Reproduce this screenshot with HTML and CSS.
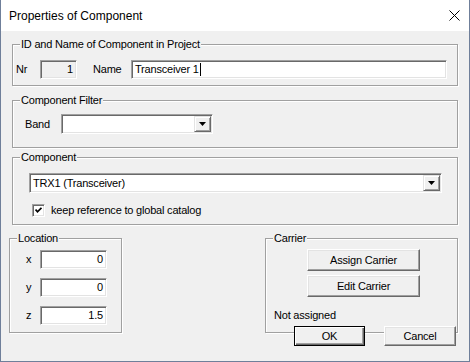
FILE: index.html
```html
<!DOCTYPE html>
<html lang="en">
<head>
    <meta charset="UTF-8">
    <title>Properties of Component</title>
    <link rel="stylesheet" href="styles.css">
</head>
<body>
    <div class="window">
        <div class="titlebar">
            <span class="title">Properties of Component</span>
            <svg class="close" width="11" height="11" viewBox="0 0 11 11">
                <path d="M0.5 0.5 L10.5 10.5 M10.5 0.5 L0.5 10.5" stroke="#000" stroke-width="1"/>
            </svg>
        </div>

        <div class="content">
            <div class="group group-id">
                <div class="legend">ID and Name of Component in Project</div>
                <div class="row">
                    <span class="lbl lbl-nr">Nr</span>
                    <div class="edit edit-nr disabled">1</div>
                    <span class="lbl lbl-name">Name</span>
                    <div class="edit edit-name">Transceiver 1<span class="caret"></span></div>
                </div>
            </div>

            <div class="group group-filter">
                <div class="legend">Component Filter</div>
                <div class="row">
                    <span class="lbl lbl-band">Band</span>
                    <div class="combo combo-band">
                        <span class="combo-text"></span>
                        <span class="drop-btn"><svg width="7" height="4" viewBox="0 0 7 4"><polygon points="0,0 7,0 3.5,4" fill="#000"/></svg></span>
                    </div>
                </div>
            </div>

            <div class="group group-component">
                <div class="legend">Component</div>
                <div class="combo combo-component">
                    <span class="combo-text">TRX1 (Transceiver)</span>
                    <span class="drop-btn"><svg width="7" height="4" viewBox="0 0 7 4"><polygon points="0,0 7,0 3.5,4" fill="#000"/></svg></span>
                </div>
                <div class="check-row">
                    <span class="check"><svg width="7" height="7" viewBox="0 0 7 7"><polyline points="0.5,2.5 2.5,4.8 6.5,0.8" fill="none" stroke="#000" stroke-width="1.8"/></svg></span>
                    <span>keep reference to global catalog</span>
                </div>
            </div>

            <div class="bottom-row">
                <div class="group group-location">
                    <div class="legend">Location</div>
                    <div class="coord-list">
                        <div class="row"><span class="lbl lbl-coord">x</span><div class="edit edit-coord">0</div></div>
                        <div class="row"><span class="lbl lbl-coord">y</span><div class="edit edit-coord">0</div></div>
                        <div class="row"><span class="lbl lbl-coord">z</span><div class="edit edit-coord">1.5</div></div>
                    </div>
                </div>

                <div class="group group-carrier">
                    <div class="legend">Carrier</div>
                    <div class="btn btn-carrier">Assign Carrier</div>
                    <div class="btn btn-carrier">Edit Carrier</div>
                    <div class="carrier-status">Not assigned</div>
                </div>
            </div>

            <div class="dialog-buttons">
                <div class="btn btn-ok">OK</div>
                <div class="btn btn-cancel">Cancel</div>
            </div>
        </div>
    </div>
</body>
</html>
```

FILE: styles.css
```css
body {
    margin: 0;
    font-family: 'Liberation Sans', Arial, sans-serif;
    font-size: 11px;
    letter-spacing: -0.2px;
    color: #000;
    background-color: #f0f0f0;
}

.window {
    width: 470px;
    height: 362px;
    box-sizing: border-box;
    border: 1px solid #6f7f9a;
    border-top: none;
    background-color: #f0f0f0;
    overflow: hidden;
}

.titlebar {
    height: 31px;
    background-color: #fff;
    display: flex;
    align-items: center;
    justify-content: space-between;
    padding: 0 9px 0 8px;
}

.title {
    font-size: 12px;
    line-height: 14px;
    letter-spacing: 0;
}

.close {
    display: block;
}

.content {
    padding: 0 11px;
}

/* group boxes */
.group {
    border: 1px solid #a0a0a0;
    box-shadow: inset 1px 1px #fff, 1px 1px #fff;
}

.legend {
    display: table;
    margin: -7px 0 0 7px;
    padding: 0 1px;
    line-height: 13px;
    background-color: #f0f0f0;
}

.row {
    display: flex;
    align-items: center;
}

.lbl {
    line-height: 13px;
}

.group-id {
    margin-top: 13px;
    padding-bottom: 6px;
}

.group-id .row {
    margin-top: 9px;
    padding-left: 3px;
}

.lbl-nr {
    width: 24px;
}

.lbl-name {
    width: 38px;
    margin-left: 16px;
}

.group-filter {
    margin-top: 14px;
    padding-bottom: 13px;
}

.group-filter .row {
    margin-top: 7px;
    padding-left: 12px;
}

.lbl-band {
    width: 36px;
}

.group-component {
    margin-top: 9px;
    padding-bottom: 7px;
}

/* edit fields */
.edit {
    box-sizing: border-box;
    height: 19px;
    line-height: 17px;
    padding: 0 3px;
    background-color: #fff;
    border: 1px solid;
    border-color: #a0a0a0 #fff #fff #a0a0a0;
    box-shadow: inset 1px 1px #696969, inset -1px -1px #e3e3e3;
    white-space: nowrap;
}

.edit.disabled {
    background-color: #f0f0f0;
}

.edit-nr {
    width: 37px;
    text-align: right;
}

.edit-name {
    flex: 1;
    margin-right: 10px;
}

.caret {
    display: inline-block;
    width: 1px;
    height: 13px;
    margin-left: 1px;
    vertical-align: -3px;
    background-color: #000;
}

/* combo boxes */
.combo {
    box-sizing: border-box;
    height: 20px;
    display: flex;
    align-items: center;
    background-color: #fff;
    border: 1px solid;
    border-color: #a0a0a0 #fff #fff #a0a0a0;
    box-shadow: inset 1px 1px #696969, inset -1px -1px #e3e3e3;
    padding: 1px;
}

.combo-text {
    flex: 1;
    padding-left: 2px;
    line-height: 16px;
}

.drop-btn {
    box-sizing: border-box;
    width: 17px;
    height: 16px;
    display: flex;
    align-items: center;
    justify-content: center;
    background-color: #f0f0f0;
    border: 1px solid;
    border-color: #e3e3e3 #696969 #696969 #e3e3e3;
    box-shadow: inset 1px 1px #fff, inset -1px -1px #a0a0a0;
}

.drop-btn svg {
    display: block;
}

.combo-band {
    width: 152px;
}

.combo-component {
    margin: 9px 15px 0 16px;
}

/* checkbox */
.check-row {
    display: flex;
    align-items: center;
    margin: 11px 0 0 19px;
    height: 13px;
    line-height: 13px;
}

.check {
    box-sizing: border-box;
    width: 13px;
    height: 13px;
    margin-right: 6px;
    display: flex;
    align-items: center;
    justify-content: center;
    background-color: #fff;
    border: 1px solid;
    border-color: #a0a0a0 #fff #fff #a0a0a0;
    box-shadow: inset 1px 1px #696969, inset -1px -1px #e3e3e3;
}

.check svg {
    display: block;
}

/* location and carrier */
.bottom-row {
    display: flex;
    justify-content: space-between;
    margin: 13px 0 0 -3px;
}

.group-location {
    width: 113px;
    box-sizing: border-box;
    padding-bottom: 7px;
}

.coord-list {
    display: flex;
    flex-direction: column;
    gap: 9px;
    margin-top: 5px;
}

.lbl-coord {
    width: 14px;
    padding-left: 16px;
}

.edit-coord {
    width: 67px;
    text-align: right;
}

.group-carrier {
    width: 193px;
    box-sizing: border-box;
    padding-bottom: 10px;
}

.btn {
    box-sizing: border-box;
    display: flex;
    align-items: center;
    justify-content: center;
    background-color: #f0f0f0;
    border: 1px solid;
    border-color: #fff #696969 #696969 #fff;
    box-shadow: inset -1px -1px #a0a0a0, inset 1px 1px #e3e3e3;
}

.btn-carrier {
    width: 113px;
    height: 22px;
    margin: 4px 0 0 41px;
}

.carrier-status {
    margin: 12px 0 0 8px;
    line-height: 13px;
}

.dialog-buttons {
    display: flex;
    justify-content: flex-end;
    gap: 19px;
    margin: -7px 2px 0 0;
}

.btn-ok {
    width: 71px;
    height: 20px;
    border: 1px solid #000;
    box-shadow: inset 1px 1px #fff, inset -1px -1px #696969, inset -2px -2px #a0a0a0;
}

.btn-cancel {
    width: 72px;
    height: 20px;
}
```
